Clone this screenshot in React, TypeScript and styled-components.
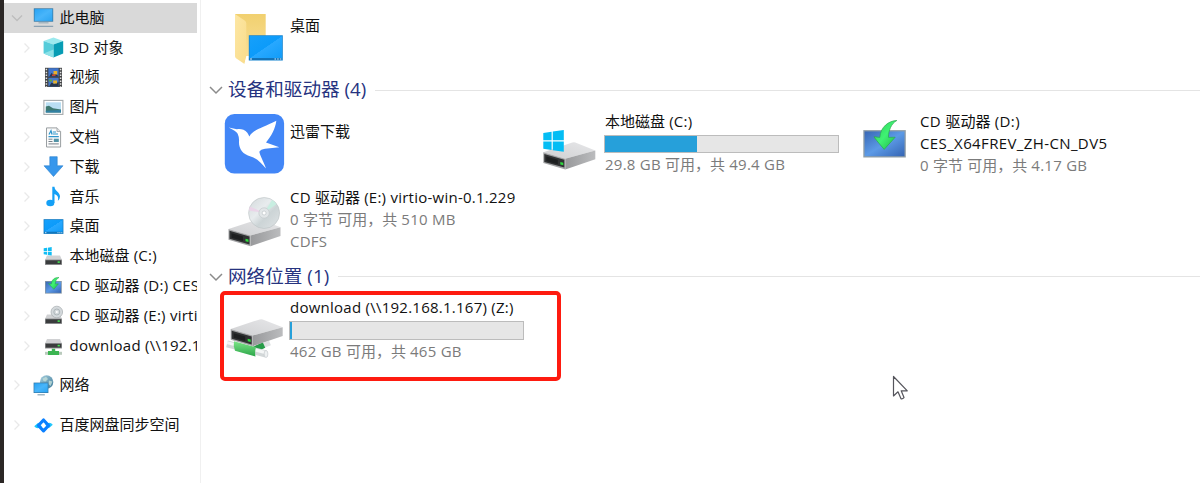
import React from "react";
import styled, { createGlobalStyle } from "styled-components";

const GlobalStyle = createGlobalStyle`
  * { box-sizing: border-box; }
  body { margin: 0; background: #fff; overflow: hidden; }
`;

const Window = styled.div`
  position: relative;
  display: flex;
  width: 1200px;
  height: 483px;
  border-left: 4px solid #2b2725;
  background: #fff;
  color: #111;
  font: 15px/22px "Open Sans", "Noto Sans CJK SC", sans-serif;
  white-space: nowrap;
`;

const Sidebar = styled.nav`
  width: 197px;
  height: 483px;
  padding: 3px 3px 0 0;
  border-right: 1px solid #f0f0f0;
`;

const TreeRow = styled.div<{ $nested?: boolean; $selected?: boolean; $gap?: boolean }>`
  display: flex;
  align-items: center;
  height: 29.8px;
  margin-top: ${(p) => (p.$gap ? 10 : 0)}px;
  padding-left: ${(p) => (p.$nested ? 17 : 7)}px;
  overflow: hidden;
  background: ${(p) => (p.$selected ? "#d9d9d9" : "transparent")};
`;

const TreeText = styled.span`
  padding-bottom: 2px;
`;

const TreeChevron = styled.svg`
  flex: none;
  width: 12px;
  height: 12px;
  margin-right: 10px;
  fill: none;
  stroke: #e9e9e9;
  stroke-width: 1.3;
`;

const TreeIcon = styled.svg`
  flex: none;
  width: 21px;
  height: 21px;
  margin-right: 5.5px;
`;

const Main = styled.main`
  flex: 1;
`;

const Group = styled.section`
  padding-left: 21px;
`;

const GroupHeader = styled.h2<{ $before: number }>`
  display: flex;
  align-items: center;
  height: 24px;
  margin: ${(p) => p.$before}px 0 3.5px;
  padding-left: 8px;
  color: #26337f;
  font-size: 18.6px;
  font-weight: 400;
  line-height: 24px;
`;

const HeaderText = styled.span`
  padding-bottom: 2px;
`;

const HeaderChevron = styled.svg`
  width: 14px;
  height: 10px;
  margin-right: 5px;
  fill: none;
  stroke: #8b8b8b;
  stroke-width: 1.5;
`;

const Rule = styled.span`
  flex: 1;
  height: 1px;
  margin-left: 9px;
  background: #e4e4e4;
`;

const Tiles = styled.div`
  display: grid;
  grid-template-columns: repeat(3, 315px);
  grid-auto-rows: 76px;
`;

const Tile = styled.div`
  display: flex;
  align-items: center;
`;

const TileIcon = styled.svg`
  flex: none;
  width: 68px;
  height: 76px;
`;

const Details = styled.div<{ $single?: boolean }>`
  display: flex;
  flex-direction: column;
  height: ${(p) => (p.$single ? 48 : 68)}px;
`;

const Line = styled.div<{ $muted?: boolean }>`
  height: 22px;
  color: ${(p) => (p.$muted ? "#7b7b7b" : "#111")};
`;

const Meter = styled.div`
  width: 234.5px;
  height: 18.5px;
  margin: 3px 0 0 -1px;
  border: 1px solid #bcbcbc;
  background: #e6e6e6;
`;

const MeterFill = styled.div`
  height: 100%;
  background: #26a0da;
`;

const Latin = styled.span<{ $fit: number }>`
  letter-spacing: ${(p) => p.$fit}px;
`;

const Highlight = styled.div`
  position: absolute;
  left: 215.5px;
  top: 290.5px;
  width: 341.5px;
  height: 90px;
  border: 4px solid #fe1b10;
  border-radius: 5px;
`;

const Pointer = styled.svg`
  position: absolute;
  left: 888px;
  top: 375px;
  width: 18px;
  height: 27px;
`;

/* Latin runs get their own tracking so that the CJK runs keep their natural advance. */
function Label({ text, fit = 0.25 }: { text: string; fit?: number }) {
  return (
    <>
      {text.split(/([\x20-\x7e]+)/).map((run, i) =>
        i % 2 ? <Latin key={i} $fit={fit}>{run}</Latin> : run
      )}
    </>
  );
}

function Gradients() {
  return (
    <svg width="0" height="0" style={{ position: "absolute" }}>
      <defs>
        <linearGradient id="screen" x1="0" y1="0" x2="1" y2="1">
          <stop offset="0" stopColor="#29a3f4" />
          <stop offset=".5" stopColor="#48b5fa" />
          <stop offset="1" stopColor="#2ba4f2" />
        </linearGradient>
        <linearGradient id="desk" x1="0" y1="0" x2="1" y2="1">
          <stop offset="0" stopColor="#16a0fb" />
          <stop offset=".5" stopColor="#0c9bfa" />
          <stop offset=".51" stopColor="#28a8ff" />
          <stop offset="1" stopColor="#119cf8" />
        </linearGradient>
        <linearGradient id="top" x1="0" y1="1" x2="1" y2="0">
          <stop offset="0" stopColor="#cfd0d2" />
          <stop offset="1" stopColor="#e7e7e9" />
        </linearGradient>
        <linearGradient id="side" x1="0" y1="0" x2="1" y2="0">
          <stop offset="0" stopColor="#98999b" />
          <stop offset="1" stopColor="#bbbcbe" />
        </linearGradient>
        <linearGradient id="folderBack" x1="0" y1="0" x2="0" y2="1">
          <stop offset="0" stopColor="#f1d06f" />
          <stop offset="1" stopColor="#fae09a" />
        </linearGradient>
        <linearGradient id="folderFront" x1="0" y1="0" x2="1" y2="1">
          <stop offset="0" stopColor="#fde7a4" />
          <stop offset="1" stopColor="#f9dc8b" />
        </linearGradient>
        <linearGradient id="cdScreen" x1="0" y1="0" x2="1" y2="1">
          <stop offset="0" stopColor="#3867b5" />
          <stop offset=".5" stopColor="#5c9ae6" />
          <stop offset="1" stopColor="#3565b4" />
        </linearGradient>
        <linearGradient id="arrow" x1="0" y1="0" x2="1" y2="1">
          <stop offset="0" stopColor="#2ecb54" />
          <stop offset=".5" stopColor="#3ff273" />
          <stop offset="1" stopColor="#1fb347" />
        </linearGradient>
        <linearGradient id="disc" x1="0" y1="0" x2="1" y2="1">
          <stop offset="0" stopColor="#d3d9db" />
          <stop offset=".4" stopColor="#e8ecee" />
          <stop offset=".6" stopColor="#ccd4d6" />
          <stop offset="1" stopColor="#dfe3e5" />
        </linearGradient>
        <linearGradient id="pipe" x1="0" y1="0" x2="0" y2="1">
          <stop offset="0" stopColor="#7be487" />
          <stop offset="1" stopColor="#2ba548" />
        </linearGradient>
        <linearGradient id="globe" x1="0" y1="0" x2="1" y2="1">
          <stop offset="0" stopColor="#a8d0df" />
          <stop offset="1" stopColor="#3b7898" />
        </linearGradient>
      </defs>
    </svg>
  );
}

function DriveBody({ x, y }: { x: number; y: number }) {
  return (
    <g transform={`translate(${x} ${y})`}>
      <path d="M0 10 29 .4q1.5-.5 3 0L52 8.2 22 16.5Z" fill="url(#top)" />
      <path d="M22 16.5 52 8.2V17L22 27.2Z" fill="url(#side)" />
      <path d="M0 10 22 16.5V27.2L0 20.8Z" fill="#a3a4a6" />
      <path d="M1 11.8 21 17.6V25.4L1 19.8Z" fill="#303233" />
      <path d="M3 14.2 14.5 17.5V22L3 18.8Z" fill="#1d1f20" />
      <path d="M17 19.8l3 .8v2.4l-3-.8Z" fill="#2edb3d" />
    </g>
  );
}

const FolderArt = () => (
  <TileIcon viewBox="0 0 68 76">
    <path d="M13 14H43.7V60H22Z" fill="url(#folderBack)" />
    <path d="M13 14 22.7 20.5Q24.3 21.5 24.3 23.5V56L22.5 64 14 58.2Q13 57.5 13 56.3Z" fill="url(#folderFront)" />
    <path d="M22.5 64 24.3 56H26.8V61Z" fill="#fff" />
    <path d="M26.8 35.2H60.8V60.5H26.8Z" fill="#1583cf" />
    <path d="M27.6 36H60V58.2H27.6Z" fill="url(#desk)" />
    <path d="M27.6 58.2H60V59.8H27.6Z" fill="#126daf" />
    <path d="M28 59h2M52.5 59h1.5M55.2 59h1.5M57.9 59h1.5" stroke="#d7efff" strokeWidth="1" />
  </TileIcon>
);

const BirdArt = () => (
  <TileIcon viewBox="0 0 68 76">
    <rect x="2.8" y="7.9" width="59.3" height="59.6" rx="9.5" fill="#4286f7" />
    <path
      transform="translate(-12 -.5) scale(.33333)"
      d="M56 66 81 71C90 69 104 71 112 82Q116 88 118 93C130 72 158 67 199 46C196 70 184 92 168 111L208 125 165 130Q152 132 148 139C150 150 160 168 168 189C155 174 140 158 122 153C98 147 86 130 87 108Q88 96 83 85Q78 76 56 66Z"
      fill="#fff"
    />
  </TileIcon>
);

const SystemDriveArt = () => (
  <TileIcon viewBox="0 0 68 76">
    <DriveBody x={6.3} y={36.2} />
    <path d="M6.3 26.9 14.6 25.7V34.2H6.3ZM15.8 25.5 26.8 24V34.2H15.8ZM6.3 35.4H14.6V44L6.3 42.8ZM15.8 35.4H26.8V45.7L15.8 44.2Z" fill="#04bdf4" />
  </TileIcon>
);

const InstallDiscArt = () => (
  <TileIcon viewBox="0 0 68 76">
    <rect x="11.3" y="24.1" width="42.5" height="27.4" fill="#8f9da6" />
    <rect x="12.6" y="25.4" width="39.9" height="24.8" fill="url(#cdScreen)" />
    <path d="M44.8 14.5C37 14.7 28.5 20.7 27.8 31.4L22 30.7Q22.5 32.2 32.2 43.4L43.2 31.2 36.5 31.4C36.5 24.7 39 17.7 44.8 14.5Z" fill="url(#arrow)" stroke="#2aa84c" strokeWidth=".7" />
  </TileIcon>
);

const DiscDriveArt = () => (
  <TileIcon viewBox="0 0 68 76">
    <DriveBody x={6.5} y={37} />
    <circle cx="42.1" cy="31" r="15.5" fill="url(#disc)" stroke="#bcc3c5" strokeWidth=".6" />
    <path d="M42 31 28 24.5A15.5 15.5 0 0 0 26.8 28.5Z" fill="#ead5e8" />
    <path d="M42 31 50 18A15.5 15.5 0 0 1 54.5 22Z" fill="#c8eee1" />
    <circle cx="42.1" cy="31" r="5.2" fill="#e2e6e8" stroke="#c3c9cb" strokeWidth=".7" />
    <circle cx="42.1" cy="31" r="2" fill="#fff" stroke="#b7bec1" strokeWidth=".6" />
  </TileIcon>
);

const NetworkDriveArt = () => (
  <TileIcon viewBox="0 0 68 76">
    <path d="M30 58 48 51" stroke="#dfe2e3" strokeWidth="5" />
    <path d="M29 59 42 53" stroke="#279c48" strokeWidth="6" />
    <path d="M5 51.8 44 62" stroke="#d2d7d8" strokeWidth="7" />
    <path d="M5 50.6 44 60.8" stroke="#f4f6f6" strokeWidth="3" />
    <path d="M12 49.3 34 55.3Q32.5 60 33.5 64.6L13 58.8Q11 54 12 49.3Z" fill="url(#pipe)" />
    <ellipse cx="44" cy="62" rx="1.9" ry="3.5" fill="#eef1f2" stroke="#bfc5c7" strokeWidth=".6" />
    <DriveBody x={8.7} y={27} />
  </TileIcon>
);

const smallDrive = (
  <>
    <path d="M4 9.5H17L19 14H2Z" fill="#d0d1d3" />
    <rect x="2" y="13.6" width="17" height="5.4" rx=".6" fill="#929496" />
    <rect x="2.7" y="14.3" width="15.6" height="3.8" fill="#3a3c3d" />
    <rect x="14.6" y="15.3" width="2.2" height="1.6" fill="#45e651" />
  </>
);

const treeArt: Record<string, React.ReactNode> = {
  pc: (
    <>
      <rect x=".8" y="1.3" width="19.4" height="13.4" fill="#3a7ca8" />
      <rect x="1.6" y="2.1" width="17.8" height="11.8" fill="url(#screen)" />
      <path d="M5.5 15.8H15.5" stroke="#9db0bd" strokeWidth="1.3" />
      <path d="M.8 19.3H20.2" stroke="#7894a8" strokeWidth="1" />
    </>
  ),
  cube: (
    <>
      <path d="M.6 4 10.5.6 20.2 4 10.5 7.5Z" fill="#9be9ee" />
      <path d="M.6 4 10.5 7.5V20.6L.6 16.5Z" fill="#55ccda" />
      <path d="M20.2 4 10.5 7.5V20.6L20.2 16.5Z" fill="#069cb4" />
      <path d="M.6 16.5 10.5 12.5V20.6Z" fill="#8ce2e8" />
    </>
  ),
  video: (
    <>
      <rect x="2" y=".8" width="17" height="19.2" fill="#424446" />
      <path d="M3.4 1.8V20M17.6 1.8V20" stroke="#e2e2e2" strokeWidth="1.5" strokeDasharray="1.5 1.4" />
      <rect x="5.4" y="1.2" width="10.2" height="8.6" fill="#3f74cc" />
      <rect x="5.4" y="10.8" width="10.2" height="8.6" fill="#4478cb" />
      <path d="M6 9.8 8.5 6 11 8 13 6.3 15.6 9.8ZM6 19.4 8.5 15.5 11.5 17 15.6 15V19.4Z" fill="#28364b" />
      <path d="M10.5 4h3.7v3.4h-3.7ZM10.2 13.6h3.8v3h-3.8Z" fill="#e8b22a" />
      <path d="M9 7.4h3.5v1.7H9Z" fill="#c7442e" />
      <path d="M6 12.5h3v2H6Z" fill="#60a549" />
    </>
  ),
  picture: (
    <>
      <rect x=".9" y="3.4" width="19" height="14" fill="#fff" stroke="#a4a9ac" strokeWidth="1.1" />
      <rect x="2.8" y="5.3" width="15.2" height="10.2" fill="#b9def2" />
      <path d="M2.8 12V9.5L6 8.8 10 11.2 18 12.4V15.5H2.8Z" fill="#3d7870" />
      <path d="M2.8 13.7 18 13V15.5H2.8Z" fill="#3281a4" />
    </>
  ),
  document: (
    <>
      <path d="M3.5.9H14L17.6 4.5V20H3.5Z" fill="#fbfbfb" stroke="#9a9fa2" />
      <path d="M14 .9V4.5H17.6" fill="#e1e4e5" stroke="#9a9fa2" strokeWidth=".8" />
      <path d="M6 7.5 8 3.7 9 7.5M9.8 5H13M9.8 7H15M5.5 9.7H15.8" stroke="#2d95cc" strokeWidth="1.2" fill="none" />
      <path d="M5.5 12.2H9.5M5.5 14.5H9.5M5.5 16.9H15.8" stroke="#77818a" />
      <rect x="10.8" y="11.7" width="5" height="3.3" fill="#5293a6" />
    </>
  ),
  download: <path d="M6.8.7H14.2V9.8H20L10.5 20.5 1 9.8H6.8Z" fill="#3797ec" stroke="#277dcb" strokeWidth=".6" />,
  music: (
    <>
      <ellipse cx="7.3" cy="17" rx="4" ry="3.3" fill="#14a0f6" />
      <path d="M9.3 17V.8H11.5C11.5 5 17 6 17 10.5Q17 13 14.8 15C16 10.5 14 9 11.5 8V17Z" fill="#14a0f6" />
    </>
  ),
  desktop: (
    <>
      <rect x=".6" y="3.2" width="19.8" height="14.7" fill="#1077bd" />
      <rect x="1.3" y="3.9" width="18.4" height="11.8" fill="url(#desk)" />
      <path d="M2 16.7h1.4M14.5 16.7h1M16.4 16.7h1M18.3 16.7h1" stroke="#c5e9ff" />
    </>
  ),
  system: (
    <>
      {smallDrive}
      <path d="M.7 2.3 4 1.8V4.9H.7ZM4.8 1.7 8.7 1.1V4.9H4.8ZM.7 5.7H4V8.8L.7 8.3ZM4.8 5.7H8.7V9.4L4.8 8.9Z" fill="#11bdf4" />
    </>
  ),
  install: (
    <>
      <rect x="2" y="5" width="16.8" height="12.6" fill="#8597a6" />
      <rect x="2.8" y="5.8" width="15.2" height="11" fill="url(#cdScreen)" />
      <path d="M16 1.5C11.5 1 8.5 4 8.3 8L5.5 7.6 10.8 13.3 15.5 7.8 12.3 8C12.3 5 13.5 2.8 16 1.5Z" fill="url(#arrow)" stroke="#23a144" strokeWidth=".5" />
    </>
  ),
  disc: (
    <>
      {smallDrive}
      <circle cx="13.8" cy="7" r="5.8" fill="#d4d9dc" stroke="#a7adb0" strokeWidth=".7" />
      <circle cx="13.8" cy="7" r="3" fill="none" stroke="#a9b2b5" strokeWidth=".9" />
      <circle cx="13.8" cy="7" r="1" fill="#fff" />
    </>
  ),
  share: (
    <>
      <g transform="translate(0 -5.5)">{smallDrive}</g>
      <path d="M2 18.3H19" stroke="#b9cabc" strokeWidth="3" />
      <path d="M8.8 13.7H12.2V16H16V20H5V16H8.8Z" fill="#3cb552" />
    </>
  ),
  network: (
    <>
      <circle cx="13.6" cy="7" r="6.7" fill="url(#globe)" />
      <path d="M9.5 3.8 13 1.8 15 4 12.5 6.5 10.5 6ZM16 5.5 19.5 6.5 17.5 11 15.5 9Z" fill="#c3dfd9" opacity=".8" />
      <rect x=".6" y="7.6" width="14.8" height="10.4" fill="#3279a8" />
      <rect x="1.3" y="8.3" width="13.4" height="9" fill="url(#screen)" />
      <path d="M4.5 19.8H11.8" stroke="#8ba5b5" strokeWidth="1.2" />
    </>
  ),
  sync: (
    <>
      <path d="M1.2 11.3 5.2 7.8 9 11.6 6.5 12.8Q3.5 14 1.2 11.3Z" fill="#18c8fb" />
      <path d="M19.8 9.7 15.8 13.2 12 9.4 14.5 8.2Q17.5 7 19.8 9.7Z" fill="#22c8fc" />
      <path d="M10.5 5 15.6 10.5 10.5 15.8 5.4 10.5Z" fill="none" stroke="#0b80ff" strokeWidth="3.2" strokeLinejoin="round" />
    </>
  ),
};

type Node = { icon: string; text: string; nested?: boolean; selected?: boolean; gap?: boolean };

const tree: Node[] = [
  { icon: "pc", text: "此电脑", selected: true },
  { icon: "cube", text: "3D 对象", nested: true },
  { icon: "video", text: "视频", nested: true },
  { icon: "picture", text: "图片", nested: true },
  { icon: "document", text: "文档", nested: true },
  { icon: "download", text: "下载", nested: true },
  { icon: "music", text: "音乐", nested: true },
  { icon: "desktop", text: "桌面", nested: true },
  { icon: "system", text: "本地磁盘 (C:)", nested: true },
  { icon: "install", text: "CD 驱动器 (D:) CES", nested: true },
  { icon: "disc", text: "CD 驱动器 (E:) virti", nested: true },
  { icon: "share", text: "download (\\\\192.1", nested: true },
  { icon: "network", text: "网络", gap: true },
  { icon: "sync", text: "百度网盘同步空间", gap: true },
];

function Header({ text, before }: { text: string; before: number }) {
  return (
    <GroupHeader $before={before}>
      <HeaderChevron viewBox="0 0 14 10"><path d="M1 2 7 8 13 2" /></HeaderChevron>
      <HeaderText><Label text={text} fit={0.1} /></HeaderText>
      <Rule />
    </GroupHeader>
  );
}

function Capacity({ used }: { used: number }) {
  return <Meter><MeterFill style={{ width: `${used}%` }} /></Meter>;
}

export default function App() {
  return (
    <Window>
      <GlobalStyle />
      <Gradients />
      <Sidebar>
        {tree.map((n) => (
          <TreeRow key={n.text} $nested={n.nested} $selected={n.selected} $gap={n.gap}>
            <TreeChevron viewBox="0 0 12 12" style={{ stroke: n.selected ? "#bdbdbd" : undefined }}>
              <path d={n.selected ? "M1 3.5 6 8.5 11 3.5" : "M3.5 1.5 8 6 3.5 10.5"} />
            </TreeChevron>
            <TreeIcon viewBox="0 0 21 21">{treeArt[n.icon]}</TreeIcon>
            <TreeText><Label text={n.text} /></TreeText>
          </TreeRow>
        ))}
      </Sidebar>
      <Main>
        <Group>
          <Tiles>
            <Tile><FolderArt /><Details $single><Line>桌面</Line></Details></Tile>
          </Tiles>
        </Group>
        <Header text="设备和驱动器 (4)" before={2} />
        <Group>
          <Tiles>
            <Tile><BirdArt /><Details $single><Line>迅雷下载</Line></Details></Tile>
            <Tile>
              <SystemDriveArt />
              <Details>
                <Line><Label text="本地磁盘 (C:)" /></Line>
                <Capacity used={39.7} />
                <Line $muted><Label text="29.8 GB 可用，共 49.4 GB" /></Line>
              </Details>
            </Tile>
            <Tile>
              <InstallDiscArt />
              <Details>
                <Line><Label text="CD 驱动器 (D:)" fit={0.4} /></Line>
                <Line><Label text="CES_X64FREV_ZH-CN_DV5" fit={0.38} /></Line>
                <Line $muted><Label text="0 字节 可用，共 4.17 GB" /></Line>
              </Details>
            </Tile>
            <Tile>
              <DiscDriveArt />
              <Details>
                <Line><Label text="CD 驱动器 (E:) virtio-win-0.1.229" /></Line>
                <Line $muted><Label text="0 字节 可用，共 510 MB" /></Line>
                <Line $muted><Label text="CDFS" /></Line>
              </Details>
            </Tile>
          </Tiles>
        </Group>
        <Header text="网络位置 (1)" before={7} />
        <Group>
          <Tiles>
            <Tile>
              <NetworkDriveArt />
              <Details>
                <Line><Label text="download (\\192.168.1.167) (Z:)" /></Line>
                <Capacity used={0.7} />
                <Line $muted><Label text="462 GB 可用，共 465 GB" /></Line>
              </Details>
            </Tile>
          </Tiles>
        </Group>
      </Main>
      <Highlight />
      <Pointer viewBox="0 0 18 27">
        <path d="M1.5 1.5V21L6 16.8 9 23.7Q10.5 24.3 12 22.6L9.2 15.8H15.3Z" fill="#fff" stroke="#55555c" strokeWidth="1.2" strokeLinejoin="round" />
      </Pointer>
    </Window>
  );
}
